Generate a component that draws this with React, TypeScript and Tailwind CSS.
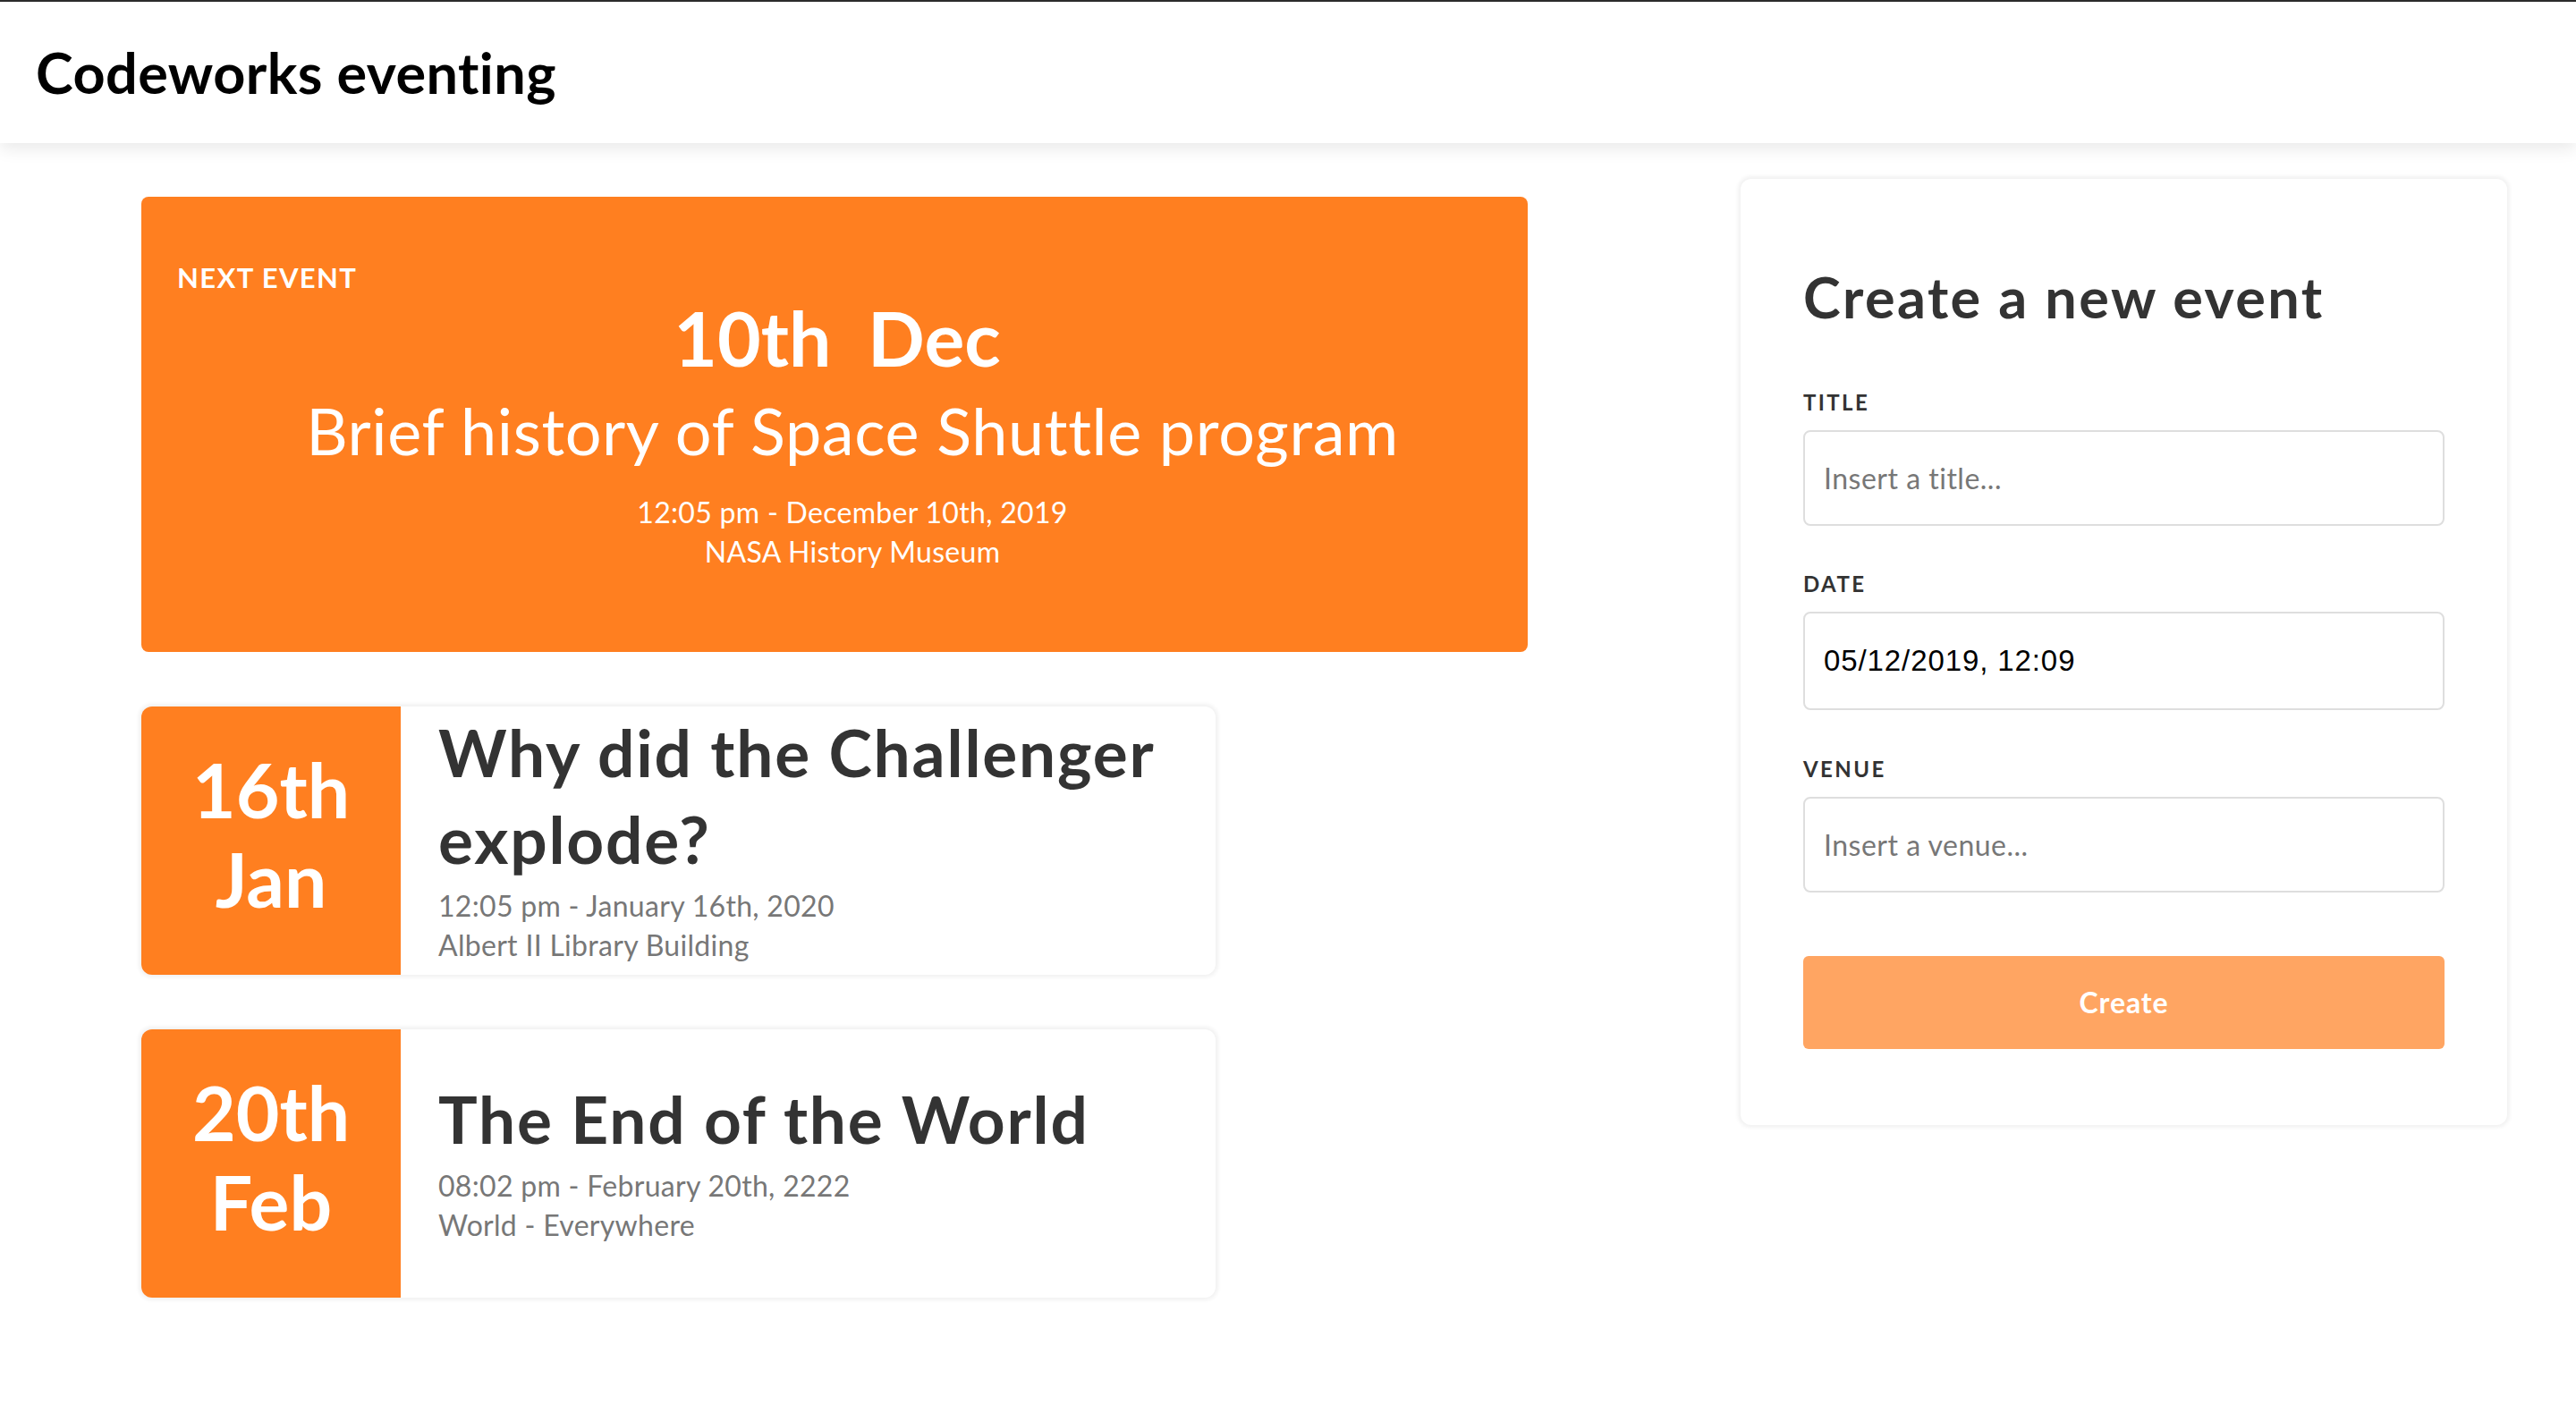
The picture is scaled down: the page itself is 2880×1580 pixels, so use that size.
import React from "react";

type EventItem = {
  day: string;
  month: string;
  title: string;
  when: string;
  venue: string;
};

const events: EventItem[] = [
  {
    day: "16th",
    month: "Jan",
    title: "Why did the Challenger explode?",
    when: "12:05 pm - January 16th, 2020",
    venue: "Albert II Library Building",
  },
  {
    day: "20th",
    month: "Feb",
    title: "The End of the World",
    when: "08:02 pm - February 20th, 2222",
    venue: "World - Everywhere",
  },
];

function EventCard({ event }: { event: EventItem }) {
  return (
    <div className="flex h-[300px] w-[1201px] overflow-hidden rounded-[12px] bg-white shadow-[0_0_4px_3px_#f2f2f2]">
      <div className="flex w-[290px] shrink-0 flex-col items-center justify-center bg-[#ff7f20] pb-[15px] text-[84px] font-bold leading-[100px] text-white">
        <span>{event.day}</span>
        <span>{event.month}</span>
      </div>
      <div className="flex flex-1 flex-col justify-center pb-[8px] pl-[42px] pr-[30px]">
        <h2 className="text-[73px] font-bold leading-[97px] tracking-[1.8px] text-[#333]">
          {event.title}
        </h2>
        <p className="mt-[4px] text-[32px] leading-[44px] tracking-[0.3px] text-[#777]">
          {event.when}
        </p>
        <p className="text-[32px] leading-[44px] tracking-[0.3px] text-[#777]">
          {event.venue}
        </p>
      </div>
    </div>
  );
}

function Field({
  label,
  placeholder,
  value,
  height,
  gap,
}: {
  label: string;
  placeholder?: string;
  value?: string;
  height: string;
  gap: string;
}) {
  return (
    <div className={gap}>
      <label className="block text-[24px] font-bold leading-[30px] tracking-[0.1em] text-[#333]">
        {label}
      </label>
      <input
        type="text"
        placeholder={placeholder}
        defaultValue={value}
        className={`mt-[16px] block w-full rounded-[8px] border-2 border-[#dedede] bg-white pl-[21px] outline-none placeholder:text-[#777] ${height} ${
          value
            ? "font-['Liberation_Sans',sans-serif] text-[33px] tracking-[0.9px] text-black"
            : "text-[32px] tracking-[0.5px] text-[#333]"
        }`}
      />
    </div>
  );
}

export default function App() {
  return (
    <div className="min-h-screen bg-white font-['Lato',sans-serif]">
      <header className="relative z-10 flex h-[160px] items-center border-t-2 border-[#2b2b2b] bg-white px-[40px] shadow-[0_6px_18px_rgba(0,0,0,0.09)]">
        <h1 className="text-[63px] font-bold tracking-[0.4px] text-black">
          Codeworks eventing
        </h1>
      </header>

      <main className="flex gap-[238px] pl-[158px] pt-[40px]">
        <section className="flex w-[1550px] flex-col gap-[61px] pt-[20px]">
          <div className="flex h-[509px] flex-col rounded-[8px] bg-[#ff7f20] pl-[40px] pt-[72px] text-white">
            <p className="text-[31px] font-bold uppercase leading-[36px] tracking-[1.4px]">
              Next event
            </p>
            <p className="whitespace-pre pr-[34px] text-center text-[84px] font-bold leading-[100px]">
              {"10th  Dec"}
            </p>
            <p className="mt-[11px] text-center text-[72px] font-normal leading-[84px] tracking-[0.6px]">
              Brief history of Space Shuttle program
            </p>
            <p className="mt-[28px] text-center text-[32px] leading-[44px] tracking-[0.3px]">
              12:05 pm - December 10th, 2019
            </p>
            <p className="text-center text-[32px] leading-[44px] tracking-[0.3px]">
              NASA History Museum
            </p>
          </div>
          {events.map((ev) => (
            <EventCard key={ev.title} event={ev} />
          ))}
        </section>

        <aside className="h-[1058px] w-[857px] shrink-0 rounded-[12px] bg-white px-[70px] pt-[95px] shadow-[0_0_4px_3px_#f2f2f2]">
          <h2 className="text-[63px] font-bold leading-[74px] tracking-[2.4px] text-[#333]">
            Create a new event
          </h2>
          <Field
            label="TITLE"
            placeholder="Insert a title..."
            height="h-[107px]"
            gap="mt-[66px]"
          />
          <Field
            label="DATE"
            value="05/12/2019, 12:09"
            height="h-[110px]"
            gap="mt-[50px]"
          />
          <Field
            label="VENUE"
            placeholder="Insert a venue..."
            height="h-[107px]"
            gap="mt-[51px]"
          />
          <button className="mt-[71px] h-[104px] w-full rounded-[6px] bg-[#ffa562] text-[32px] font-bold tracking-[0.9px] text-white">
            Create
          </button>
        </aside>
      </main>
    </div>
  );
}
